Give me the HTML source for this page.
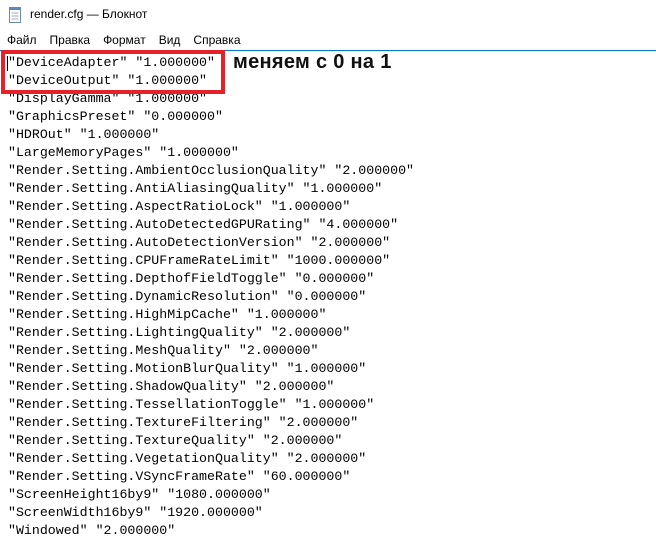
<!DOCTYPE html>
<html><head><meta charset="utf-8"><style>
body{margin:0;width:656px;height:538px;background:#fff;overflow:hidden;position:relative;font-family:"Liberation Sans","DejaVu Sans",sans-serif;}
.title{position:absolute;left:30px;top:7px;font-size:12px;color:#000;}
.menu{position:absolute;top:33px;left:7px;font-size:12px;color:#000;}
.menu span{margin-right:13px;}
.bl{position:absolute;left:0;right:0;top:50px;height:1px;background:#0078d7;}
pre{position:absolute;left:8px;top:54px;margin:0;font-family:"Liberation Mono",monospace;font-size:13.27px;line-height:18px;color:#000;}
.box{position:absolute;left:1px;top:50px;width:216px;height:36px;border:4px solid #e8202a;}
.ann{position:absolute;left:233px;top:51px;font-size:20px;font-weight:bold;color:#111;letter-spacing:0.3px;}
.cur{position:absolute;left:7px;top:56px;width:1px;height:15px;background:#000;}
</style></head><body>
<svg style="position:absolute;left:8px;top:7px" width="14" height="16"><rect x="1.5" y="2.5" width="11" height="13" fill="#fff" stroke="#6a8ab0"/><rect x="1" y="0" width="12" height="3" fill="#5d87c0"/><line x1="3.5" y1="6" x2="10.5" y2="6" stroke="#9ab"/><line x1="3.5" y1="9" x2="10.5" y2="9" stroke="#9ab"/><line x1="3.5" y1="12" x2="10.5" y2="12" stroke="#9ab"/></svg>
<div class="title">render.cfg — Блокнот</div>
<div class="menu"><span>Файл</span><span>Правка</span><span>Формат</span><span>Вид</span><span>Справка</span></div>
<div class="bl"></div>
<pre>"DeviceAdapter" "1.000000"
"DeviceOutput" "1.000000"
"DisplayGamma" "1.000000"
"GraphicsPreset" "0.000000"
"HDROut" "1.000000"
"LargeMemoryPages" "1.000000"
"Render.Setting.AmbientOcclusionQuality" "2.000000"
"Render.Setting.AntiAliasingQuality" "1.000000"
"Render.Setting.AspectRatioLock" "1.000000"
"Render.Setting.AutoDetectedGPURating" "4.000000"
"Render.Setting.AutoDetectionVersion" "2.000000"
"Render.Setting.CPUFrameRateLimit" "1000.000000"
"Render.Setting.DepthofFieldToggle" "0.000000"
"Render.Setting.DynamicResolution" "0.000000"
"Render.Setting.HighMipCache" "1.000000"
"Render.Setting.LightingQuality" "2.000000"
"Render.Setting.MeshQuality" "2.000000"
"Render.Setting.MotionBlurQuality" "1.000000"
"Render.Setting.ShadowQuality" "2.000000"
"Render.Setting.TessellationToggle" "1.000000"
"Render.Setting.TextureFiltering" "2.000000"
"Render.Setting.TextureQuality" "2.000000"
"Render.Setting.VegetationQuality" "2.000000"
"Render.Setting.VSyncFrameRate" "60.000000"
"ScreenHeight16by9" "1080.000000"
"ScreenWidth16by9" "1920.000000"
"Windowed" "2.000000"</pre>
<div class="cur"></div>
<div class="box"></div>
<div class="ann">меняем с 0 на 1</div>
</body></html>
